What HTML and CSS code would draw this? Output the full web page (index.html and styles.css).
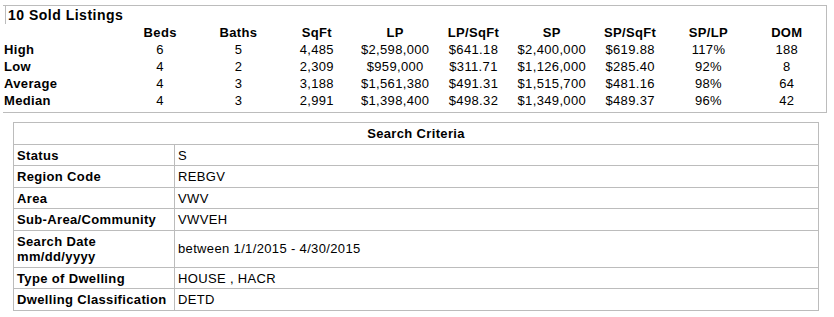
FILE: index.html
```html
<!DOCTYPE html>
<html>
<head>
<meta charset="utf-8">
<link rel="stylesheet" href="styles.css">
</head>
<body>
<div class="summary">
  <div class="title">10 Sold Listings</div>
  <div class="grid">
    <div class="lbl"></div>
    <div class="hd">Beds</div><div class="hd">Baths</div><div class="hd">SqFt</div><div class="hd">LP</div><div class="hd">LP/SqFt</div><div class="hd">SP</div><div class="hd">SP/SqFt</div><div class="hd">SP/LP</div><div class="hd">DOM</div>

    <div class="lbl">High</div>
    <div>6</div><div>5</div><div>4,485</div><div>$2,598,000</div><div>$641.18</div><div>$2,400,000</div><div>$619.88</div><div>117%</div><div>188</div>

    <div class="lbl">Low</div>
    <div>4</div><div>2</div><div>2,309</div><div>$959,000</div><div>$311.71</div><div>$1,126,000</div><div>$285.40</div><div>92%</div><div>8</div>

    <div class="lbl">Average</div>
    <div>4</div><div>3</div><div>3,188</div><div>$1,561,380</div><div>$491.31</div><div>$1,515,700</div><div>$481.16</div><div>98%</div><div>64</div>

    <div class="lbl">Median</div>
    <div>4</div><div>3</div><div>2,991</div><div>$1,398,400</div><div>$498.32</div><div>$1,349,000</div><div>$489.37</div><div>96%</div><div>42</div>
  </div>
</div>

<table class="criteria">
  <colgroup><col class="c1"><col></colgroup>
  <tr><th colspan="2" class="head">Search Criteria</th></tr>
  <tr><th>Status</th><td>S</td></tr>
  <tr><th>Region Code</th><td>REBGV</td></tr>
  <tr><th>Area</th><td>VWV</td></tr>
  <tr><th>Sub-Area/Community</th><td>VWVEH</td></tr>
  <tr><th>Search Date<br>mm/dd/yyyy</th><td>between 1/1/2015 - 4/30/2015</td></tr>
  <tr><th>Type of Dwelling</th><td>HOUSE , HACR</td></tr>
  <tr><th>Dwelling Classification</th><td>DETD</td></tr>
</table>
</body>
</html>
```

FILE: styles.css
```css
html, body {
  margin: 0;
  padding: 0;
  background: #fff;
}
body {
  font-family: "Liberation Sans", Arial, sans-serif;
  font-size: 13px;
  color: #000;
  letter-spacing: 0.35px;
}
.summary {
  margin: 5px 0 0 3px;
  width: 822px;
  padding: 0 0 3px 1px;
  border-top: 1px solid #bcbcbc;
  border-right: 1px solid #bcbcbc;
  border-bottom: 1px solid #bcbcbc;
}
.title {
  margin-left: 1px;
  padding-left: 2px;
  border-left: 1px solid #bcbcbc;
  font-weight: bold;
  font-size: 14px;
  letter-spacing: 0.5px;
  line-height: 18px;
}
.grid {
  display: grid;
  grid-template-columns: 117px repeat(9, 1fr);
  line-height: 17px;
}
.grid > div {
  text-align: center;
  white-space: nowrap;
}
.grid > .lbl {
  text-align: left;
  font-weight: bold;
}
.grid > .hd {
  font-weight: bold;
}
.criteria {
  margin: 9px 0 0 13px;
  width: 806px;
  table-layout: fixed;
  border-collapse: collapse;
}
.criteria .c1 {
  width: 161px;
}
.criteria th,
.criteria td {
  border: 1px solid #bcbcbc;
  padding: 3px 3px 2px 3px;
  line-height: 15.5px;
  text-align: left;
  vertical-align: middle;
  white-space: nowrap;
}
.criteria th {
  font-weight: bold;
}
.criteria th.head {
  text-align: center;
}
```
